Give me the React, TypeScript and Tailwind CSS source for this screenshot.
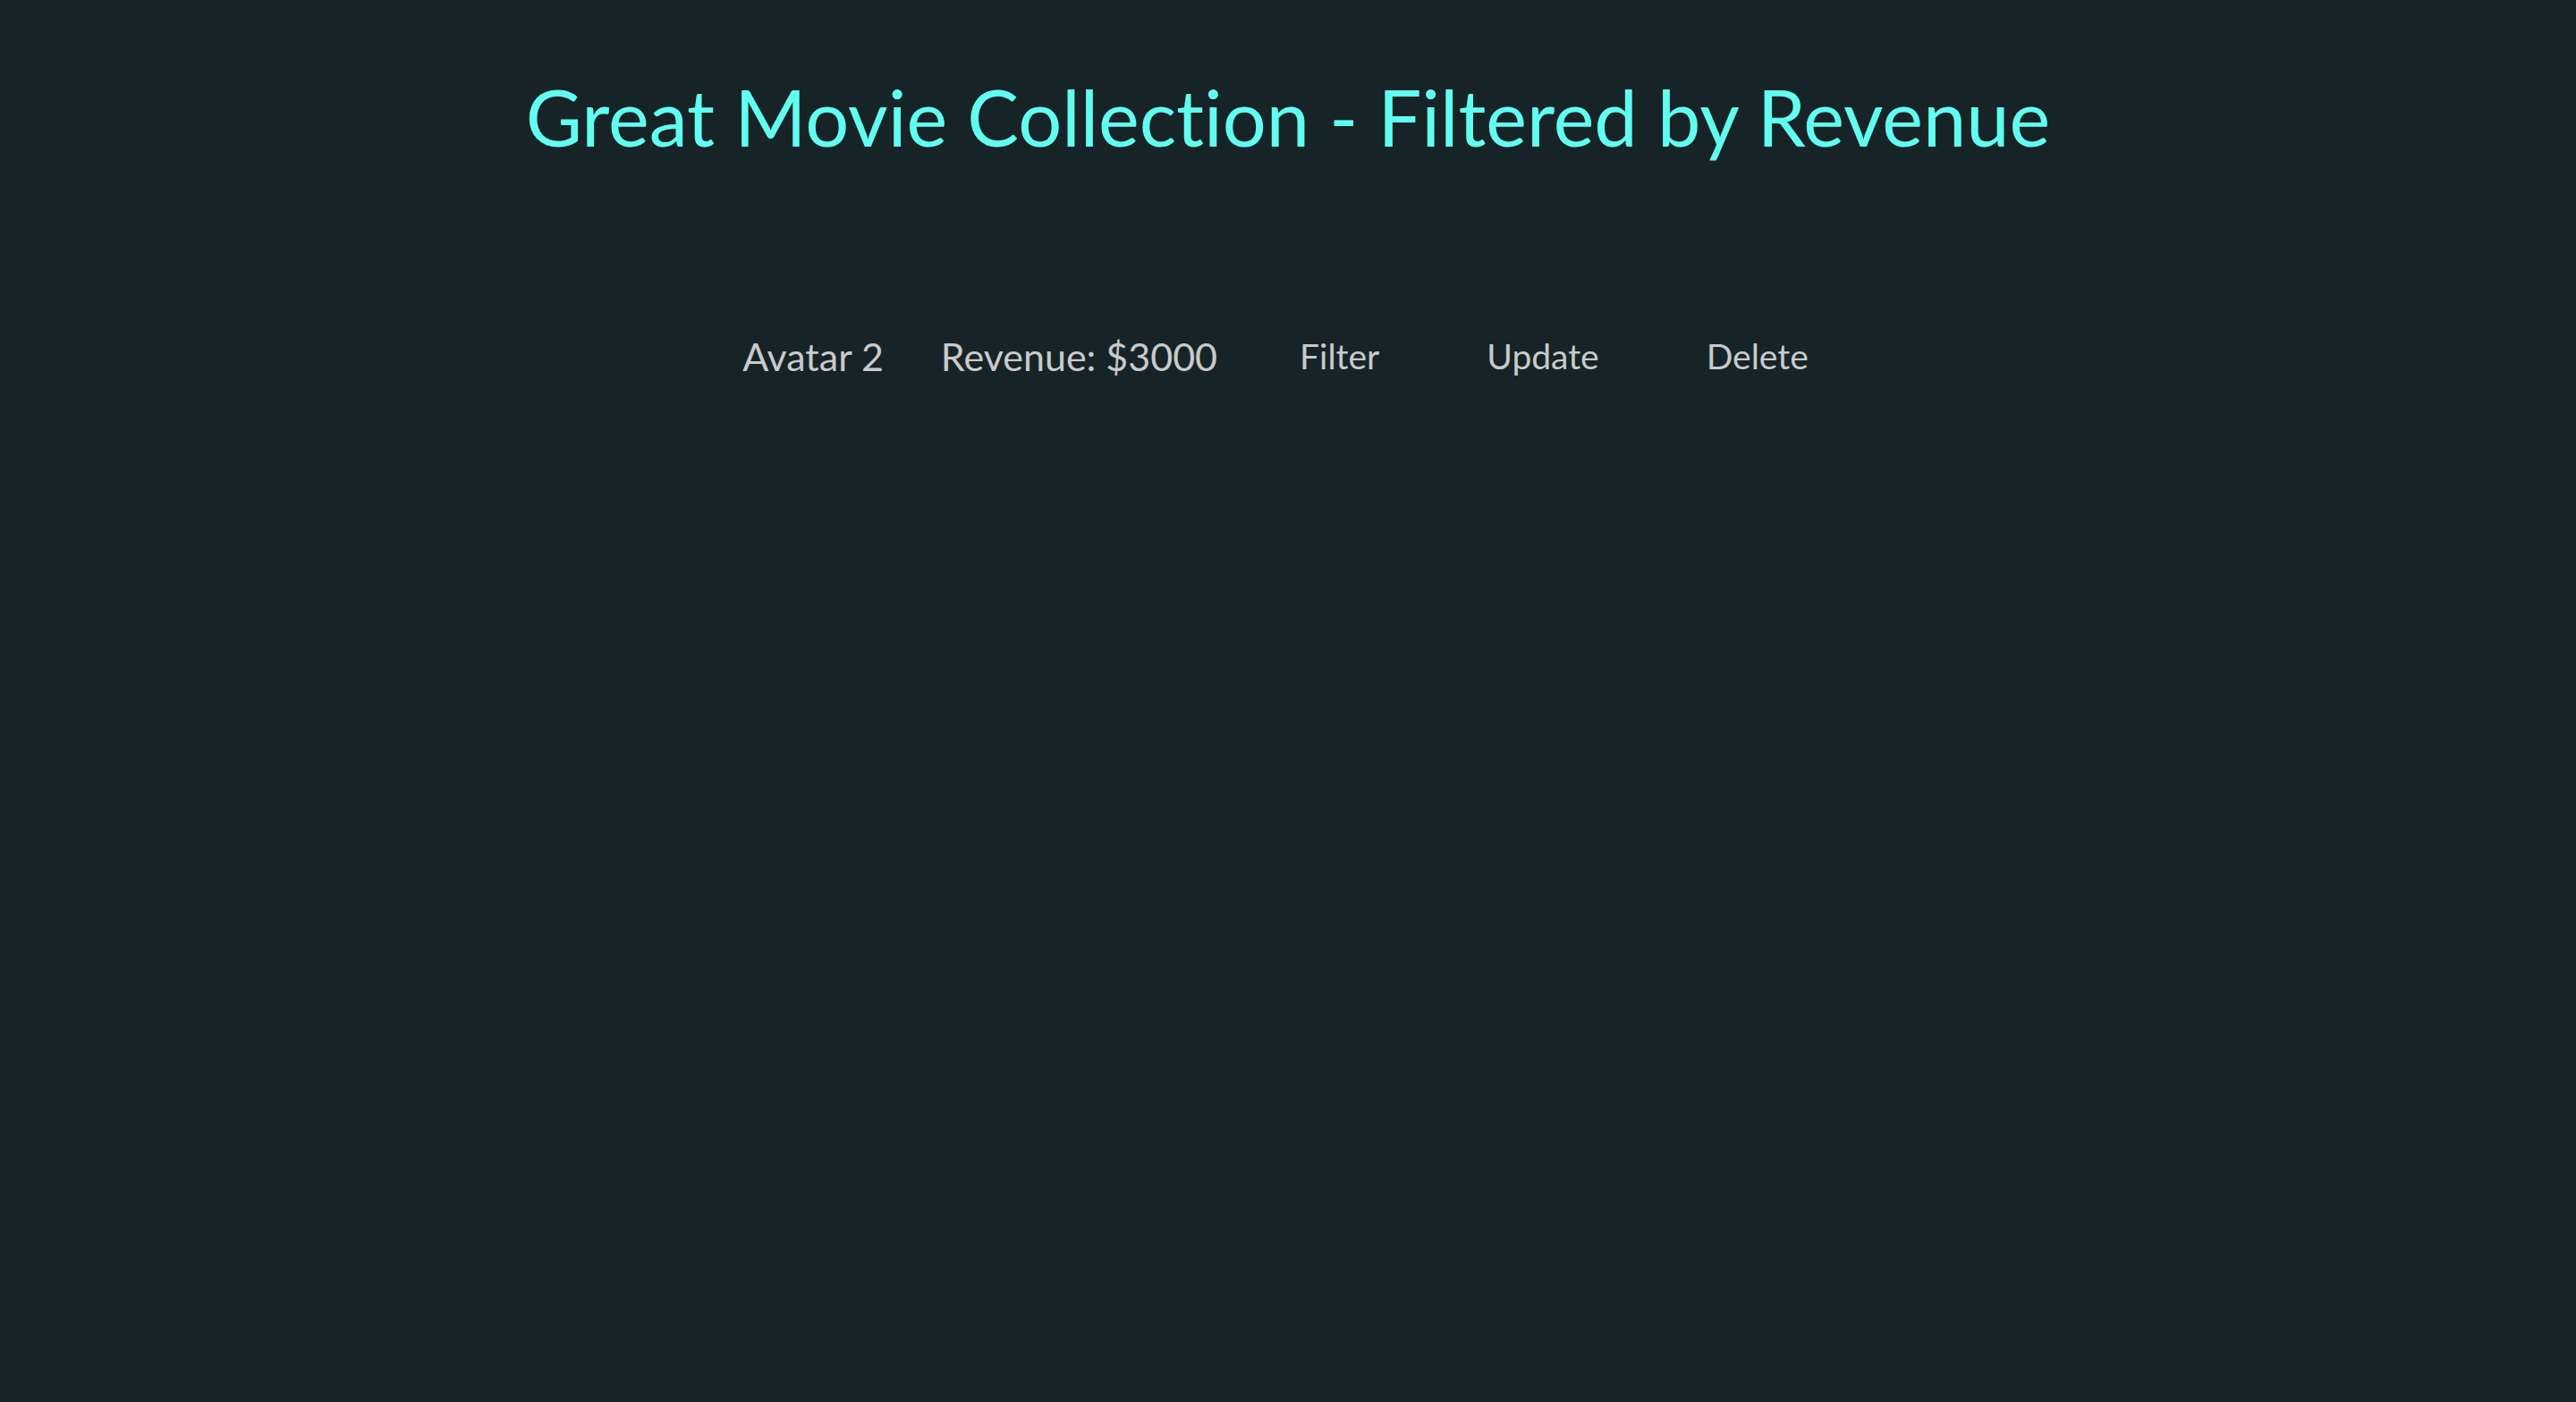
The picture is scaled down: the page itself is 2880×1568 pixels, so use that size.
import React, { useState } from "react";

interface Movie {
  id: number;
  title: string;
  revenue: number;
}

const startMovies: Movie[] = [{ id: 1, title: "Avatar 2", revenue: 3000 }];

const App: React.FC = () => {
  const [movies, setMovies] = useState<Movie[]>(startMovies);

  const handleDelete = (id: number) => {
    setMovies((prev) => prev.filter((m) => m.id !== id));
  };

  const handleUpdate = (id: number) => {
    setMovies((prev) => prev.map((m) => (m.id === id ? { ...m, revenue: m.revenue + 1000 } : m)));
  };

  return (
    <div className="min-h-screen bg-[#172427] font-['Lato',sans-serif] [font-variant-ligatures:none] pt-[79px]">
      {/* Titulo */}
      <h1 className="text-center text-[86.5px] leading-[1.2] text-[#62fdf1]">
        Great Movie Collection - Filtered by Revenue
      </h1>

      {/* Lista */}
      <ul className="mt-[190px] flex flex-col items-center">
        {movies.map((m) => (
          <li key={m.id} className="flex items-center gap-[64px] text-[#c8cacb]">
            <span className="text-[43px] leading-[1.2]">{m.title}</span>
            <span className="text-[43px] leading-[1.2]">Revenue: ${m.revenue}</span>
            <button className="px-[28px] text-[39px] leading-[1.2]">Filter</button>
            <button className="px-[28px] text-[39px] leading-[1.2]" onClick={() => handleUpdate(m.id)}>
              Update
            </button>
            <button className="px-[28px] text-[39px] leading-[1.2]" onClick={() => handleDelete(m.id)}>
              Delete
            </button>
          </li>
        ))}
      </ul>
    </div>
  );
};

export default App;
